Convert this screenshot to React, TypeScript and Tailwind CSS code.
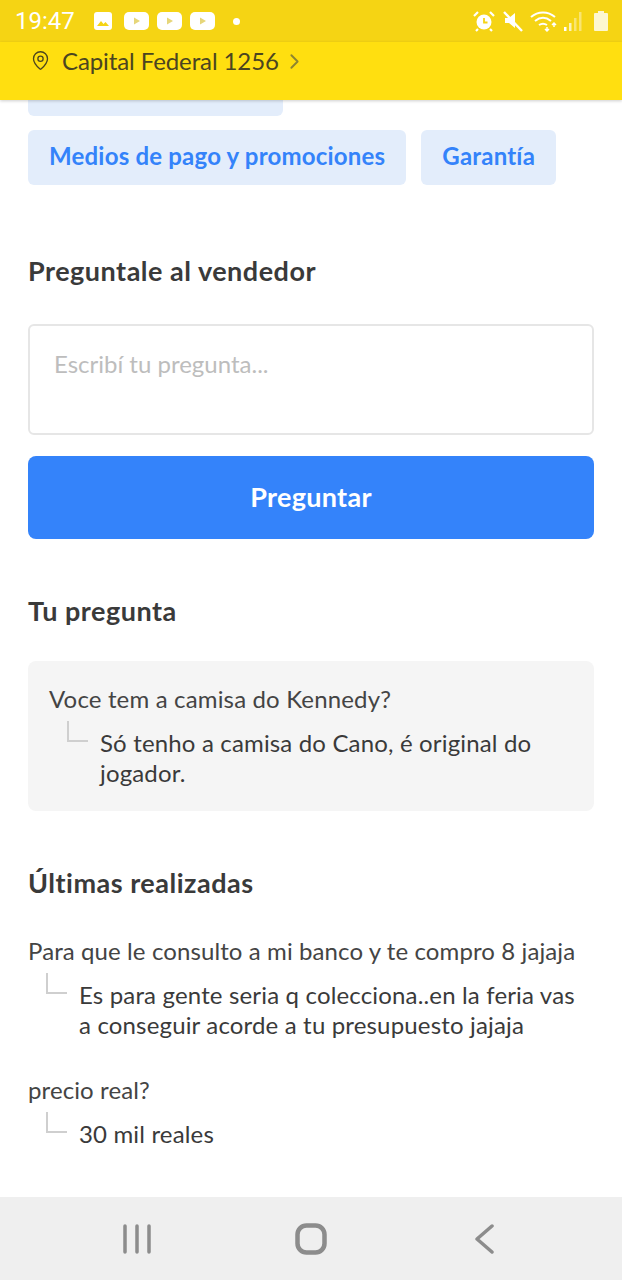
import React from 'react';
import { MapPin, ChevronRight } from 'lucide-react';

const font = "font-['Lato','Open_Sans',sans-serif]";

function Answer({ text, indent = 'pl-[18px]', pr = '' }: any) {
  return (
    <div className={`flex mt-[7px] ${indent} ${pr}`}>
      <div className="w-[21px] h-[21px] shrink-0 border-l-2 border-b-2 border-[#cfcfcf]" />
      <p className="ml-[12px] mt-[7px] text-[24px] leading-[30px] tracking-[0.16px] text-[#3a3a3a]">{text}</p>
    </div>
  );
}

function PlayBadge() {
  return (
    <svg width="25" height="18" viewBox="0 0 25 18">
      <rect width="25" height="18" rx="5" fill="#fff" />
      <path d="M10 5.500v7l6-3.500z" fill="#e6d67a" />
    </svg>
  );
}

function StatusBar() {
  return (
    <div className="h-[42px] shrink-0 bg-[#f5d414] flex items-center pl-[15px] pr-[13px] text-white">
      <span className="text-[24px] font-['Roboto',sans-serif] leading-none">19:47</span>
      <svg width="18" height="18" viewBox="0 0 18 18" className="ml-[19px]">
        <rect width="18" height="18" rx="3" fill="#fff" />
        <path d="M3 14l4-5 2.500 3 2-2 3.500 4z" fill="#f5d414" />
      </svg>
      <div className="flex items-center gap-[8px] ml-[12px]">
        <PlayBadge />
        <PlayBadge />
        <PlayBadge />
      </div>
      <div className="w-[7px] h-[7px] rounded-full bg-white ml-[18px]" />
      <div className="ml-auto flex items-center">
        <svg width="24" height="24" viewBox="0 0 24 24" fill="none">
          <circle cx="12" cy="13" r="7.500" fill="#fff" />
          <path d="M12 9v4.500h3.500" stroke="#f5d414" strokeWidth="1.800" />
          <path d="M2 7l4-4M22 7l-4-4M6 20l-2 2M18 20l2 2" stroke="#fff" strokeWidth="2.200" />
        </svg>
        <svg width="22" height="24" viewBox="0 0 22 24" fill="none" className="ml-[6px]">
          <path d="M3 9h4l6-5v15l-6-5H3z" fill="#fff" />
          <path d="M2 3l18 19" stroke="#fff" strokeWidth="2.400" />
        </svg>
        <svg width="28" height="24" viewBox="0 0 28 24" fill="none" stroke="#fff" strokeWidth="2" className="ml-[6px]">
          <path d="M1 8c7-6 17-6 24 0M5 12c5-4 11-4 16 0M9 16c3-2 5-2 8 0" />
          <path d="M15 20l2 2 2-2M17 22v-4M22 16l2-2 2 2M24 14v4" strokeWidth="1.500" />
        </svg>
        <svg width="20" height="24" viewBox="0 0 20 24" className="ml-[5px]">
          <rect x="1" y="18" width="2.500" height="4" fill="#fff" />
          <rect x="6" y="14" width="2.500" height="8" fill="#fff" opacity="0.7" />
          <rect x="11" y="9" width="2.500" height="13" fill="#fff" opacity="0.4" />
          <rect x="16" y="3" width="2.500" height="19" fill="#fff" opacity="0.4" />
        </svg>
        <svg width="16" height="24" viewBox="0 0 16 24" className="ml-[10px]">
          <path d="M5 2h6v2h3a1 1 0 0 1 1 1v16a1 1 0 0 1-1 1H2a1 1 0 0 1-1-1V5a1 1 0 0 1 1-1h3z" fill="#fff" opacity="0.8" />
        </svg>
      </div>
    </div>
  );
}

export default function App() {
  return (
    <div className={`h-[1280px] w-[622px] flex flex-col overflow-hidden bg-white ${font}`}>
      <StatusBar />

      <div className="relative z-10 h-[58px] shrink-0 bg-[#ffdf10] shadow-[0_1px_3px_rgba(0,0,0,0.2)] flex items-start pl-[30px] pt-[4px] text-[#4b4520]">
        <MapPin size={21} strokeWidth={1.500} className="mt-[4px]" />
        <span className="ml-[11px] text-[24px] leading-[30px] tracking-[-0.1px]">Capital Federal 1256</span>
        <ChevronRight size={25} strokeWidth={1.800} className="ml-[3px] mt-[3px] text-[#8d8530]" />
      </div>

      <div className="flex-1 min-h-0 px-[28px]">
        <div className="w-[255px] h-[16px] bg-[#e3edfb] rounded-b-[6px]" />
        <div className="flex gap-[15px] mt-[14px]">
          <div className="h-[55px] px-[21px] pb-[3px] flex items-center rounded-[6px] bg-[#e3edfb] text-[#3483fa] text-[24px] tracking-[0.2px] font-bold">Medios de pago y promociones</div>
          <div className="h-[55px] px-[21px] pb-[3px] flex items-center rounded-[6px] bg-[#e3edfb] text-[#3483fa] text-[24px] tracking-[0.2px] font-bold">Garantía</div>
        </div>

        <h2 className="mt-[68px] text-[27px] leading-[36px] tracking-[0.5px] font-bold text-[#3a3a3a]">Preguntale al vendedor</h2>

        <div className="mt-[35px] h-[111px] rounded-[6px] border-2 border-[#e6e6e6] px-[24px] pt-[23px] text-[24px] leading-[30px] text-[#bdbdbd]">Escribí tu pregunta...</div>

        <div className="mt-[21px] h-[83px] rounded-[8px] bg-[#3483fa] pb-[1px] flex items-center justify-center text-white text-[27px] tracking-[0.3px] font-bold">Preguntar</div>

        <h2 className="mt-[54px] text-[27px] leading-[36px] tracking-[0.5px] font-bold text-[#3a3a3a]">Tu pregunta</h2>

        <div className="mt-[32px] h-[150px] rounded-[8px] bg-[#f5f5f5] pl-[21px] pr-[40px] pt-[23px]">
          <p className="text-[24px] leading-[30px] tracking-[0.16px] text-[#444]">Voce tem a camisa do Kennedy?</p>
          <Answer text="Só tenho a camisa do Cano, é original do jogador." />
        </div>

        <h2 className="mt-[54px] text-[27px] leading-[36px] tracking-[0.5px] font-bold text-[#3a3a3a]">Últimas realizadas</h2>

        <p className="mt-[35px] text-[24px] leading-[30px] tracking-[0.1px] text-[#444]">Para que le consulto a mi banco y te compro 8 jajaja</p>
        <Answer pr="pr-[10px]" text="Es para gente seria q colecciona..en la feria vas a conseguir acorde a tu presupuesto jajaja" />

        <p className="mt-[35px] text-[24px] leading-[30px] tracking-[0.1px] text-[#444]">precio real?</p>
        <Answer text="30 mil reales" />
      </div>

      <div className="h-[83px] shrink-0 bg-[#efefef] flex items-center pl-[122px] text-[#8c8c8c]">
        <svg width="30" height="30" viewBox="0 0 30 30" fill="none" stroke="currentColor" strokeWidth="3.500" strokeLinecap="round">
          <path d="M3 2v26M15 2v26M27 2v26" />
        </svg>
        <svg width="32" height="32" viewBox="0 0 32 32" fill="none" stroke="currentColor" strokeWidth="4.500" className="ml-[143px]">
          <rect x="2.500" y="2.500" width="27" height="27" rx="9" />
        </svg>
        <svg width="20" height="30" viewBox="0 0 20 30" fill="none" stroke="currentColor" strokeWidth="3.500" strokeLinecap="round" strokeLinejoin="round" className="ml-[147px]">
          <path d="M18 2L3 15l15 13" />
        </svg>
      </div>
    </div>
  );
}
